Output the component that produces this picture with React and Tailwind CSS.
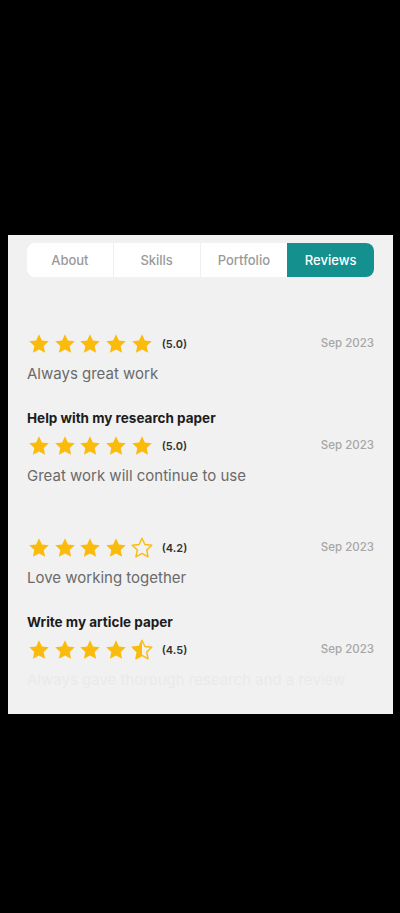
import React from "react";

const reviews = [
  { title: "", rating: 5, label: "(5.0)", date: "Sep 2023", text: "Always great work" },
  { title: "Help with my research paper", rating: 5, label: "(5.0)", date: "Sep 2023", text: "Great work will continue to use" },
  { title: "", rating: 4, label: "(4.2)", date: "Sep 2023", text: "Love working together" },
  { title: "Write my article paper", rating: 4.5, label: "(4.5)", date: "Sep 2023", text: "Always gave thorough research and a review", faded: true },
];

const STAR = "M12 2.2l2.9 6.3 6.9.8-5.1 4.7 1.4 6.8L12 17.4l-6.1 3.4 1.4-6.8L2.2 9.3l6.9-.8z";

function Star({ type }) {
  return (
    <svg width="24" height="24" viewBox="0 0 24 24" className="shrink-0">
      <defs>
        <clipPath id="half-left">
          <rect x="0" y="0" width="12" height="24" />
        </clipPath>
      </defs>
      {type === "full" && <path d={STAR} fill="#fbbb0c" />}
      {type === "empty" && (
        <path d={STAR} fill="none" stroke="#fbbb0c" strokeWidth="1.4" strokeLinejoin="round" />
      )}
      {type === "half" && (
        <>
          <path d={STAR} fill="none" stroke="#fbbb0c" strokeWidth="1.4" strokeLinejoin="round" />
          <path d={STAR} fill="#fbbb0c" clipPath="url(#half-left)" />
        </>
      )}
    </svg>
  );
}

function Stars({ rating }) {
  const items = [];
  for (let i = 1; i <= 5; i++) {
    if (rating >= i) items.push("full");
    else if (rating >= i - 0.5) items.push("half");
    else items.push("empty");
  }
  return (
    <div className="flex items-center gap-[1.7px]">
      {items.map((t, i) => (
        <Star key={i} type={t} />
      ))}
    </div>
  );
}

function ReviewItem({ review }) {
  return (
    <div className="flex flex-col">
      <div className="h-[20px] text-[13.5px] leading-[20px] font-bold text-[#1c1c1c]">
        {review.title}
      </div>
      <div className="mt-[6px] h-[24px] flex items-center justify-between">
        <div className="flex items-center">
          <Stars rating={review.rating} />
          <span className="ml-[8px] text-[11px] font-semibold text-[#333]">{review.label}</span>
        </div>
        <span className="text-[11.5px] font-medium text-[#a6a6a6]">{review.date}</span>
      </div>
      <p
        className={
          "mt-[8px] h-[20px] text-[15px] leading-[20px] " +
          (review.faded ? "text-[#eaeaea]" : "text-[#6a6a6a]")
        }
      >
        {review.text}
      </p>
    </div>
  );
}

export default function App() {
  const tabs = ["About", "Skills", "Portfolio", "Reviews"];
  return (
    <div
      className="w-[400px] h-[913px] bg-black flex flex-col"
      style={{ fontFamily: "Inter, 'Noto Sans', sans-serif" }}
    >
      <div className="h-[235px] shrink-0" />
      <div className="ml-[8px] w-[385px] h-[479px] bg-[#f1f1f1] overflow-hidden flex flex-col px-[19px]">
        {/* Tabs */}
        <div className="mt-[8px] h-[34px] grid grid-cols-4 bg-white rounded-[8px] overflow-hidden">
          {tabs.map((tab, i) => (
            <div
              key={tab}
              className={
                "flex items-center justify-center text-[13px] font-medium pt-[1px] " +
                (tab === "Reviews"
                  ? "bg-[#14918f] text-white"
                  : "text-[#9a9a9a] " + (i < 2 ? "border-r border-[#efefef]" : ""))
              }
            >
              {tab}
            </div>
          ))}
        </div>

        {/* Reviews */}
        <div className="mt-[29px] flex flex-col gap-[24px]">
          {reviews.map((r, i) => (
            <ReviewItem key={i} review={r} />
          ))}
        </div>
      </div>
    </div>
  );
}
